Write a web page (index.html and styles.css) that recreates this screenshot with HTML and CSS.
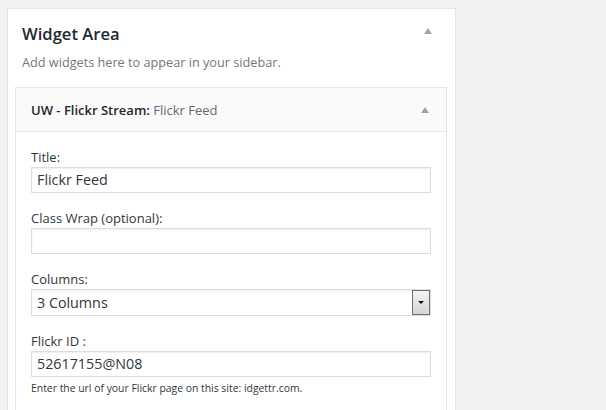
FILE: index.html
```html
<!DOCTYPE html>
<html>
<head>
<meta charset="utf-8">
<link rel="stylesheet" href="styles.css">
</head>
<body>
<div class="sidebar">
  <div class="sidebar-head">
    <h2 class="sidebar-title">Widget Area</h2>
    <span class="toggle-arrow"></span>
  </div>
  <p class="sidebar-desc">Add widgets here to appear in your sidebar.</p>
  <div class="widget">
    <div class="widget-top">
      <div class="widget-title"><strong>UW - Flickr Stream:</strong> <span class="in-title">Flickr Feed</span></div>
      <span class="toggle-arrow"></span>
    </div>
    <div class="widget-inside">
      <div class="field">
        <label class="field-label">Title:</label>
        <div class="text-input">Flickr Feed</div>
      </div>
      <div class="field">
        <label class="field-label">Class Wrap (optional):</label>
        <div class="text-input"></div>
      </div>
      <div class="field">
        <label class="field-label">Columns:</label>
        <div class="select">
          <span class="select-value">3 Columns</span>
          <span class="select-button"><span class="select-caret"></span></span>
        </div>
      </div>
      <div class="field">
        <label class="field-label">Flickr ID :</label>
        <div class="text-input">52617155@N08</div>
        <small class="help">Enter the url of your Flickr page on this site: idgettr.com.</small>
      </div>
    </div>
  </div>
</div>
</body>
</html>
```

FILE: styles.css
```css
* { box-sizing: border-box; }
html, body {
  margin: 0;
  padding: 0;
  background: #f1f1f1;
  font-family: "Open Sans", "Liberation Sans", sans-serif;
  color: #32373c;
  overflow: hidden;
  height: 410px;
}
.sidebar {
  margin: 8px 0 0 7px;
  width: 449px;
  height: 420px;
  background: #fff;
  border: 1px solid #e5e5e5;
  border-bottom: none;
}
.sidebar-head {
  display: flex;
  align-items: flex-start;
  justify-content: space-between;
  padding: 15px 23px 0 14px;
}
.sidebar-title {
  margin: 0;
  font-size: 16.6px;
  line-height: 20px;
  font-weight: 600;
  color: #23282d;
}
.toggle-arrow {
  width: 0;
  height: 0;
  border-left: 4px solid transparent;
  border-right: 4px solid transparent;
  border-bottom: 6px solid #a0a5aa;
  margin-top: 4px;
}
.sidebar-desc {
  margin: 8px 0 0 14px;
  font-size: 12.7px;
  line-height: 20px;
  color: #72777c;
}
.widget {
  margin: 15px 8px 0 7px;
  border: 1px solid #e5e5e5;
  background: #fff;
}
.widget-top {
  height: 44px;
  background: #fafafa;
  border-bottom: 1px solid #e5e5e5;
  display: flex;
  align-items: center;
  justify-content: space-between;
  padding: 0 17px 0 15px;
}
.widget-title {
  font-size: 13px;
  color: #23282d;
}
.widget-title strong { font-weight: 600; }
.in-title { color: #606a73; font-weight: 400; }
.widget-top .toggle-arrow { margin-top: 0; }
.widget-inside {
  padding: 16px 15px 20px 15px;
}
.field {
  display: flex;
  flex-direction: column;
  margin-bottom: 16px;
}
.field-label {
  font-size: 13px;
  line-height: 18px;
  margin-bottom: 1px;
  color: #32373c;
}
.text-input {
  height: 26px;
  border: 1px solid #ddd;
  box-shadow: inset 0 1px 2px rgba(0,0,0,.07);
  background: #fff;
  padding: 0 5px;
  font-size: 14.3px;
  line-height: 24px;
  color: #32373c;
}
.select {
  height: 27px;
  border: 1px solid #ddd;
  box-shadow: inset 0 1px 2px rgba(0,0,0,.07);
  display: flex;
  align-items: stretch;
  background: #fff;
}
.select-value {
  flex: 1;
  padding: 0 5px;
  font-size: 14.3px;
  line-height: 25px;
}
.select-button {
  width: 18px;
  border: 1px solid #6f6f6f;
  background: linear-gradient(#f4f4f4, #d4d4d4);
  display: flex;
  align-items: center;
  justify-content: center;
}
.select-caret {
  width: 0;
  height: 0;
  border-left: 3px solid transparent;
  border-right: 3px solid transparent;
  border-top: 3px solid #111;
}
.help {
  margin-top: 4px;
  font-size: 10.4px;
  line-height: 14px;
  color: #32373c;
}
```
